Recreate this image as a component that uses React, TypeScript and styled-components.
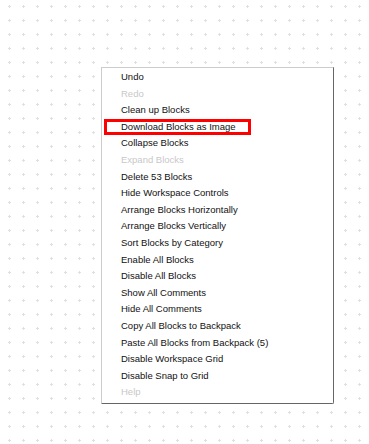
import styled, { createGlobalStyle } from 'styled-components';

const GlobalStyle = createGlobalStyle`
  html, body {
    margin: 0;
    padding: 0;
    background: #fff;
  }
  body {
    font-family: "Liberation Sans", Arial, sans-serif;
  }
`;

const Workspace = styled.div`
  position: relative;
  width: 369px;
  height: 444px;
  overflow: hidden;
  background: #fff;
`;

const GridLayer = styled.svg`
  position: absolute;
  inset: 0;
  width: 100%;
  height: 100%;
`;

const ContextMenu = styled.div`
  position: absolute;
  left: 101px;
  top: 67px;
  width: 231px;
  padding: 1px 0 2px;
  background: #fff;
  border-style: solid;
  border-width: 1px;
  border-color: #ccc #666 #666 #ccc;
  border-radius: 0 0 2px 0;
  box-sizing: content-box;
`;

const MenuItem = styled.div<{ $disabled?: boolean; $marked?: boolean }>`
  position: relative;
  height: 16.6px;
  line-height: 16.6px;
  padding-left: 19px;
  font-size: 9.5px;
  color: ${({ $disabled }) => ($disabled ? '#c8c8c8' : '#111')};
  white-space: nowrap;

  ${({ $marked }) =>
    $marked &&
    `
    &::after {
      content: '';
      position: absolute;
      left: 2px;
      top: 0;
      width: 147px;
      height: 16.6px;
      box-sizing: border-box;
      border: 3px solid #f00;
    }
  `}
`;

const items: { label: string; disabled?: boolean; marked?: boolean }[] = [
  { label: 'Undo' },
  { label: 'Redo', disabled: true },
  { label: 'Clean up Blocks' },
  { label: 'Download Blocks as Image', marked: true },
  { label: 'Collapse Blocks' },
  { label: 'Expand Blocks', disabled: true },
  { label: 'Delete 53 Blocks' },
  { label: 'Hide Workspace Controls' },
  { label: 'Arrange Blocks Horizontally' },
  { label: 'Arrange Blocks Vertically' },
  { label: 'Sort Blocks by Category' },
  { label: 'Enable All Blocks' },
  { label: 'Disable All Blocks' },
  { label: 'Show All Comments' },
  { label: 'Hide All Comments' },
  { label: 'Copy All Blocks to Backpack' },
  { label: 'Paste All Blocks from Backpack (5)' },
  { label: 'Disable Workspace Grid' },
  { label: 'Disable Snap to Grid' },
  { label: 'Help', disabled: true },
];

export default function App() {
  return (
    <>
      <GlobalStyle />
      <Workspace>
        <GridLayer>
          <defs>
            <pattern id="grid" width="14" height="14" patternUnits="userSpaceOnUse">
              <line x1="8" y1="6.5" x2="11" y2="6.5" stroke="#e0e0e0" strokeWidth="1" />
              <line x1="9.5" y1="5" x2="9.5" y2="8" stroke="#e0e0e0" strokeWidth="1" />
            </pattern>
          </defs>
          <rect width="100%" height="100%" fill="url(#grid)" />
        </GridLayer>
        <ContextMenu>
          {items.map((it) => (
            <MenuItem key={it.label} $disabled={it.disabled} $marked={it.marked}>
              {it.label}
            </MenuItem>
          ))}
        </ContextMenu>
      </Workspace>
    </>
  );
}
